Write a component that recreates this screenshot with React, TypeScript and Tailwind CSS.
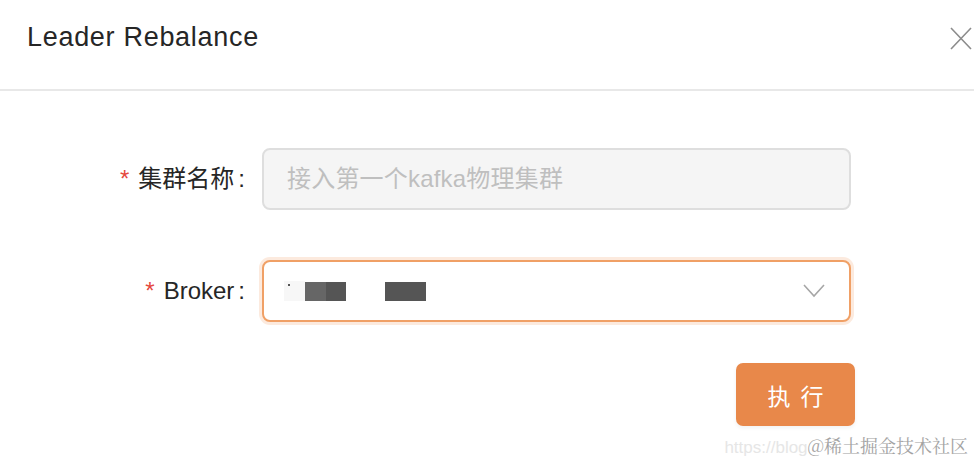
import React from 'react'

const sans = "font-['Liberation_Sans','Noto_Sans_CJK_SC',sans-serif]"

function Label({ text }: { text: string }) {
  return (
    <div className="flex w-[247px] shrink-0 items-center justify-end text-[24px] text-[#262626]">
      <span className="mr-[9px] text-[24px] text-[#e5483d]">*</span>
      <span>{text}</span>
      <span className="ml-[4px] mr-[2px]">:</span>
    </div>
  )
}

export default function App() {
  return (
    <div className={`relative h-[466px] w-[974px] overflow-hidden bg-white ${sans}`}>
      <div className="flex h-[91px] items-start justify-between border-b-[2px] border-[#e8e8e8] pl-[27px] pr-[2px] pt-[20px]">
        <h1 className="text-[27px] leading-[34px] tracking-[0.7px] text-[#262626]">Leader Rebalance</h1>
        <svg className="mt-[7px]" width="22" height="23" viewBox="0 0 22 23" fill="none">
          <path d="M1 1 L21 22 M21 1 L1 22" stroke="#8c8c8c" strokeWidth="1.6" />
        </svg>
      </div>

      <div className="flex flex-col pt-[57px]">
        <div className="flex items-center">
          <Label text="集群名称" />
          <div className="ml-[15px] flex h-[62px] w-[589px] items-center rounded-[8px] border-[2px] border-[#dedede] bg-[#f5f5f5] px-[23px] text-[24px] tracking-[0.2px] text-[#bfbfbf]">
            接入第一个kafka物理集群
          </div>
        </div>

        <div className="mt-[50px] flex items-center">
          <Label text="Broker" />
          <div className="ml-[15px] flex h-[62px] w-[589px] items-center rounded-[8px] border-[2px] border-[#f0a066] bg-white pl-[20px] pr-[24px] shadow-[0_0_0_3px_rgba(240,140,70,0.18)]">
            <div className="flex flex-1 items-center">
              <div className="relative h-[20px] w-[21px] bg-[#f7f7f7]">
                <span className="absolute left-[4px] top-[3px] h-[2px] w-[2px] bg-[#555]" />
              </div>
              <div className="h-[19px] w-[21px] bg-[#666666]" />
              <div className="h-[19px] w-[20px] bg-[#555555]" />
              <div className="ml-[39px] h-[19px] w-[41px] bg-[#555555]" />
            </div>
            <svg width="22" height="14" viewBox="0 0 22 14" fill="none">
              <path d="M1 1 L11 12 L21 1" stroke="#a6a6a6" strokeWidth="1.6" />
            </svg>
          </div>
        </div>

        <div className="mt-[41px] flex justify-end pr-[119px]">
          <button
            type="button"
            className="flex h-[63px] w-[119px] items-center justify-center rounded-[7px] bg-[#e8884a] pt-[5px] text-[23px] tracking-[10px] text-white shadow-[0_2px_4px_rgba(0,0,0,0.06)]"
          >
            <span className="pl-[10px]">执行</span>
          </button>
        </div>
      </div>

      <div className="absolute bottom-[6px] right-[6px] flex items-baseline text-[18px]">
        <span className="text-[17px] text-[#e6e6e6]">https://blog</span>
        <span className="font-['Noto_Serif_CJK_SC','Noto_Sans_CJK_SC',serif] text-[#a3a3a3]">@稀土掘金技术社区</span>
      </div>
    </div>
  )
}
